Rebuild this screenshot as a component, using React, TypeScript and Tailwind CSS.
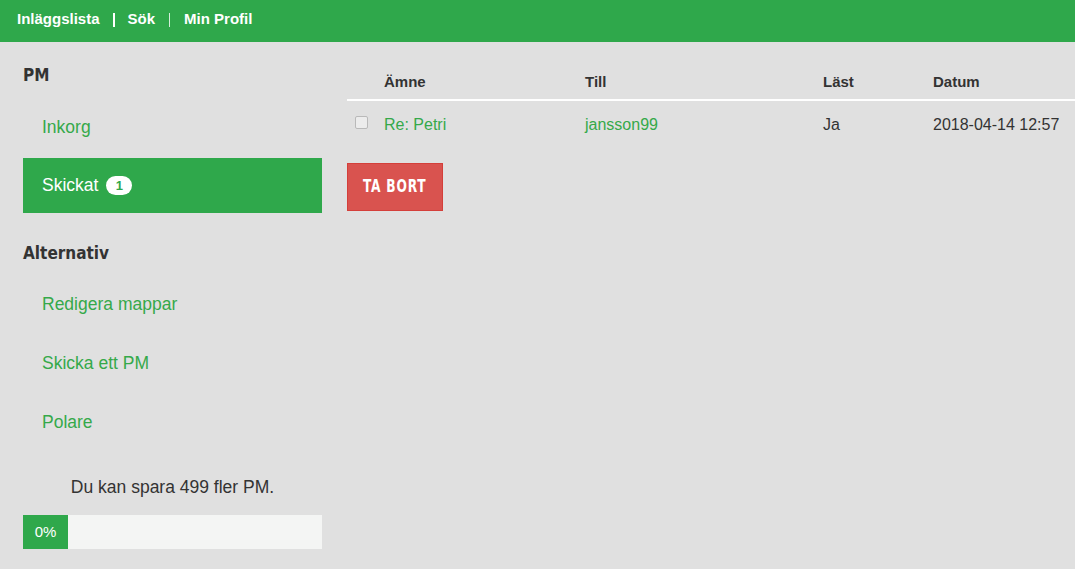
import React from 'react';

const green = 'bg-[#2fa84b]';

const SideLink: React.FC<{ label: string; active?: boolean; badge?: number }> = ({ label, active, badge }) => (
  <div
    className={`flex h-[55px] items-center px-[19px] text-[17.5px] ${
      active ? `${green} text-white` : 'text-[#35a94a]'
    }`}
  >
    <span>{label}</span>
    {badge !== undefined && (
      <span className="ml-[8px] inline-flex h-[19px] min-w-[26px] items-center justify-center rounded-full bg-white px-2 text-[13px] font-bold text-[#2fa84b]">
        {badge}
      </span>
    )}
  </div>
);

const App: React.FC = () => {
  return (
    <div className="min-h-[569px] bg-[#e0e0e0] font-['Liberation_Sans',Arial,sans-serif] text-[#333]">
      <header className={`${green} flex h-[42px] items-center pb-[3px] pl-[17px] text-[15px] font-bold text-white`}>
        <span>Inläggslista</span>
        <span className="mx-[13px] h-[14px] w-[2px] bg-white" />
        <span>Sök</span>
        <span className="mx-[14px] h-[14px] w-px bg-white/80" />
        <span>Min Profil</span>
      </header>

      <div className="flex">
        <aside className="ml-[23px] w-[299px] shrink-0">
          <h2 className="mt-[21px] h-[24px] font-['DejaVu_Sans_Condensed',sans-serif] text-[17px] font-bold leading-[24px] text-[#333]">
            PM
          </h2>
          <div className="mt-[13px] flex flex-col gap-[3px]">
            <SideLink label="Inkorg" />
            <SideLink label="Skickat" active badge={1} />
          </div>
          <h2 className="mt-[28px] h-[24px] font-['DejaVu_Sans_Condensed',sans-serif] text-[17px] font-bold leading-[24px] text-[#333]">
            Alternativ
          </h2>
          <div className="mt-[12px] flex flex-col gap-[4px]">
            <SideLink label="Redigera mappar" />
            <SideLink label="Skicka ett PM" />
            <SideLink label="Polare" />
          </div>
          <p className="mt-[25px] h-[24px] text-center text-[17.5px] leading-[24px] text-[#333]">Du kan spara 499 fler PM.</p>
          <div className="mt-[16px] flex h-[34px] bg-[#f4f5f4]">
            <div className={`${green} flex w-[45px] items-center justify-center text-[15px] text-white`}>0%</div>
          </div>
        </aside>

        <main className="ml-[25px] flex-1">
          <table className="w-full table-fixed border-collapse text-[15px]">
            <colgroup>
              <col className="w-[29px]" />
              <col className="w-[201px]" />
              <col className="w-[238px]" />
              <col className="w-[110px]" />
              <col />
            </colgroup>
            <thead>
              <tr className="h-[58px] border-b-2 border-white text-left">
                <th className="pt-[28px] pb-[4px]" />
                <th className="pt-[28px] pb-[4px] pl-[8px] font-bold">Ämne</th>
                <th className="pt-[28px] pb-[4px] pl-[8px] font-bold">Till</th>
                <th className="pt-[28px] pb-[4px] pl-[8px] font-bold">Läst</th>
                <th className="pt-[28px] pb-[4px] pl-[8px] font-bold">Datum</th>
              </tr>
            </thead>
            <tbody>
              <tr className="h-[48px] text-[16px]">
                <td className="pl-[8px] align-middle">
                  <span className="mb-[4px] block h-[13px] w-[13px] rounded-[2px] border border-[#b9b9b9] bg-[#ececec]" />
                </td>
                <td className="pl-[8px] text-[#35a94a]">Re: Petri</td>
                <td className="pl-[8px] text-[#35a94a]">jansson99</td>
                <td className="pl-[8px]">Ja</td>
                <td className="pl-[8px]">2018-04-14 12:57</td>
              </tr>
            </tbody>
          </table>
          <button className="mt-[15px] flex h-[48px] w-[96px] items-center justify-center border border-[#d43f3a] bg-[#d9534f] text-white">
            <span className="inline-block scale-x-[0.8] font-['DejaVu_Sans_Condensed',sans-serif] text-[17px] font-bold tracking-[1px]">
              TA BORT
            </span>
          </button>
        </main>
      </div>
    </div>
  );
};

export default App;
